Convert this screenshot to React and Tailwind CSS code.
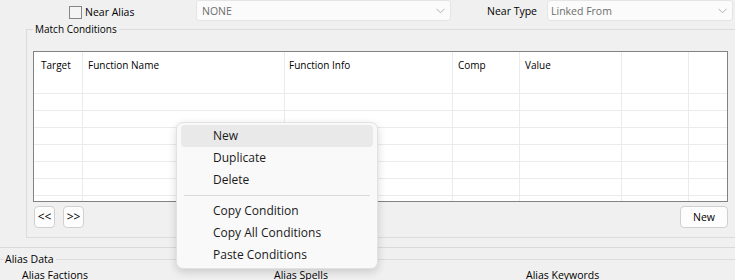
import React from 'react';

const font = { fontFamily: '"Open Sans", "Noto Sans", sans-serif' };

function Chevron() {
  return (
    <svg width="9" height="6" viewBox="0 0 9 6" fill="none">
      <path d="M0.5 0.8 L4.5 4.8 L8.5 0.8" stroke="#a8a8a8" strokeWidth="0.9" />
    </svg>
  );
}

function Combo({ value, className = '', textPad = 'pl-[5px]' }) {
  return (
    <div
      className={`flex h-[21px] items-center justify-between rounded-[3px] border border-[#e5e5e5] bg-[#fbfbfb] pr-[5px] ${textPad} ${className}`}
    >
      <span className="text-[10.5px] leading-[16px] text-[#6d6d6d]">{value}</span>
      <Chevron />
    </div>
  );
}

const columns = [
  { name: 'Target', w: 'w-[49px]', pad: 'pl-[7px]' },
  { name: 'Function Name', w: 'w-[202px]', pad: 'pl-[5px]' },
  { name: 'Function Info', w: 'w-[168px]', pad: 'pl-[4px]' },
  { name: 'Comp', w: 'w-[67px]', pad: 'pl-[5px]' },
  { name: 'Value', w: 'w-[102px]', pad: 'pl-[5px]' },
  { name: '', w: 'w-[67px]', pad: '' },
  { name: '', w: 'flex-1', pad: '', last: true },
];

const rowCount = 6;

function ConditionsTable() {
  return (
    <div className="flex h-[151px] w-[695px] overflow-hidden border border-[#828282] bg-white">
      {columns.map((col, i) => (
        <div
          key={i}
          className={`flex h-full flex-col ${col.w} ${col.last ? '' : 'border-r border-[#ebebeb]'}`}
        >
          <div className={`h-[42px] shrink-0 border-b border-[#ebebeb] pt-[5px] ${col.pad}`}>
            <span className="text-[10px] leading-[16px] text-black">{col.name}</span>
          </div>
          {Array.from({ length: rowCount }).map((_, r) => (
            <div key={r} className="h-[17px] shrink-0 border-b border-[#ebebeb]" />
          ))}
        </div>
      ))}
    </div>
  );
}

function SmallButton({ children, className = '' }) {
  return (
    <button
      className={`flex h-[22px] items-center justify-center rounded-[4px] border border-[#d0d0d0] bg-[#fdfdfd] leading-[16px] text-black ${className}`}
    >
      {children}
    </button>
  );
}

function MenuItem({ label, active }) {
  return (
    <div
      className={`mx-[4px] flex h-[22px] items-center rounded-[4px] pl-[32px] text-[12px] leading-[16px] text-[#1a1a1a] ${
        active ? 'bg-[#e9e9e9]' : ''
      }`}
    >
      {label}
    </div>
  );
}

function ContextMenu() {
  return (
    <div className="absolute left-[176px] top-[122px] w-[202px] rounded-[7px] border border-[#e2e2e2] bg-[#f9f9f9] pb-[2px] pt-[2px] shadow-[0_3px_9px_rgba(0,0,0,0.16)]">
      <MenuItem label="New" active />
      <MenuItem label="Duplicate" />
      <MenuItem label="Delete" />
      <div className="mx-[7px] my-[4px] h-px bg-[#dadada]" />
      <MenuItem label="Copy Condition" />
      <MenuItem label="Copy All Conditions" />
      <MenuItem label="Paste Conditions" />
    </div>
  );
}

export default function App() {
  return (
    <div
      className="relative flex h-[280px] w-[735px] flex-col overflow-hidden bg-[#f0f0f0] text-[10px] text-black"
      style={font}
    >
      {/* top options row */}
      <div className="flex h-[21px] shrink-0 items-center">
        <div className="ml-[69px] mt-[3px] flex w-[127px] items-center">
          <div className="h-[13px] w-[13px] border border-[#868686] bg-[#f4f4f4]" />
          <span className="ml-[3px] text-[10.5px] leading-[16px]">Near Alias</span>
        </div>
        <Combo value="NONE" className="w-[255px]" />
        <div className="ml-[36px] mt-[1px] w-[60px] text-[10.5px] leading-[16px]">Near Type</div>
        <Combo value="Linked From" className="w-[186px]" textPad="pl-[3px]" />
      </div>

      {/* match conditions group */}
      <fieldset className="ml-[26px] w-[720px] shrink-0 border border-[#dcdcdc] pb-[9px] pl-[6px] pt-[13px]">
        <legend className="px-[2px] leading-[17px]">Match Conditions</legend>
        <ConditionsTable />
        <div className="mt-[4px] flex w-[695px] items-center">
          <SmallButton className="ml-px w-[21px] text-[12px]">&lt;&lt;</SmallButton>
          <SmallButton className="ml-[8px] w-[21px] text-[12px]">&gt;&gt;</SmallButton>
          <SmallButton className="ml-auto w-[48px] text-[10.5px]">New</SmallButton>
        </div>
      </fieldset>

      <div className="h-[10px] shrink-0 border-b border-[#dadada]" />

      {/* alias data group */}
      <fieldset className="-ml-[2px] mt-[3px] w-[745px] shrink-0 border border-[#dcdcdc] pl-[5px]">
        <legend className="pl-[1px] pr-[2px] text-[10.5px] leading-[16px]">Alias Data</legend>
        <div className="grid grid-cols-[252px_252px_252px] pl-[18px] text-[10.5px] leading-[16px]">
          <span>Alias Factions</span>
          <span>Alias Spells</span>
          <span>Alias Keywords</span>
        </div>
      </fieldset>

      <ContextMenu />
    </div>
  );
}
